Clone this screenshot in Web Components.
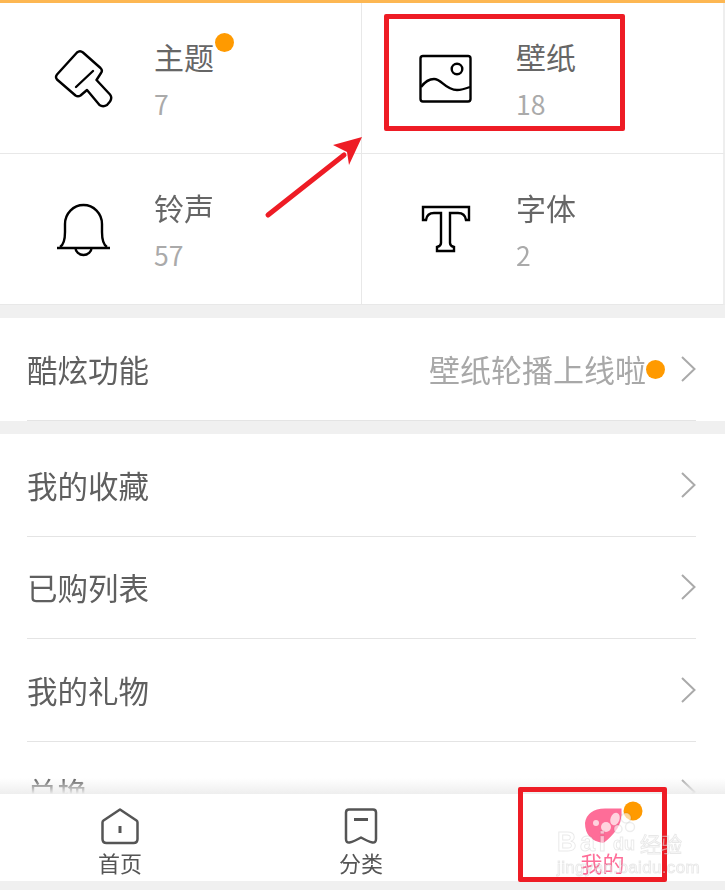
<!DOCTYPE html>
<html lang="zh">
<head>
<meta charset="utf-8">
<title>我的</title>
<style>
  html, body { margin: 0; padding: 0; background: #f0f0f0; }
  body { font-family: "Noto Sans CJK SC", "Noto Sans", sans-serif; width: 725px; height: 890px; overflow: hidden; }
</style>
</head>
<body>
<app-page>
  <tile-grid>
    <theme-tile name="主题" count="7" dot>
      <svg viewBox="54 45 60 66" width="60" height="66" fill="none" stroke="#000" stroke-width="2.4" stroke-linejoin="round" stroke-linecap="round">
        <path d="M77 52.5q3-2.5 6 0L100.5 68q2.5 2.5.5 5L96.500 80 110 94.500q2.500 3 0 7l-3 3.500q-4 2.500-7.500 0L87 90l-6.500 5.500q-2.500 1.500-5 0L57 79.500q-2-2.500 0-5z"/>
        <path d="M76 87L93 71"/>
      </svg>
    </theme-tile>
    <theme-tile name="壁纸" count="18">
      <svg viewBox="54 45 60 66" width="60" height="66" fill="none" stroke="#000" stroke-width="2.400">
        <rect x="58.500" y="56" width="50" height="45.500" rx="2.500"/>
        <circle cx="95" cy="69" r="5.300"/>
        <path d="M59 87q6-8 13-8c8 0 11 11 23 11 5 0 9-1.500 13-3"/>
      </svg>
    </theme-tile>
    <theme-tile name="铃声" count="57">
      <svg viewBox="54 45 60 66" width="60" height="66" fill="none" stroke="#000" stroke-width="2.400">
        <path d="M57 97h53"/>
        <path d="M60 96q5-3 5-15V73a18.500 19 0 0 1 37 0v8q0 12 5 15"/>
        <path d="M75.500 97a8 7 0 0 0 16 0"/>
      </svg>
    </theme-tile>
    <theme-tile name="字体" count="2">
      <svg viewBox="54 45 60 66" width="60" height="66" fill="none" stroke="#000" stroke-width="2.400" stroke-linejoin="miter">
        <path transform="translate(-362 -151)" d="M423 207H469V220H466Q465 213 458 213H450V243Q450 246 454 247V251H437V247Q441 246 441 243V213H434Q427 213 426 220H423Z"/>
      </svg>
    </theme-tile>
  </tile-grid>

  <list-group class="feature">
    <list-row label="酷炫功能" note="壁纸轮播上线啦" dot></list-row>
  </list-group>

  <list-group class="fill">
    <list-row label="我的收藏"></list-row>
    <list-row label="已购列表"></list-row>
    <list-row label="我的礼物"></list-row>
    <list-row label="兑换"></list-row>
  </list-group>

  <tab-bar>
    <tab-item label="首页">
      <svg viewBox="0 0 40 38" width="40" height="38" fill="none" stroke="#555" stroke-width="2.500" stroke-linejoin="round">
        <path d="M20 2.500L36.500 13.500q1 .7 1 2V32q0 4-4 4H6.500q-4 0-4-4V15.500q0-1.300 1-2z"/>
        <path d="M20 19v7" stroke-width="3"/>
      </svg>
    </tab-item>
    <tab-item label="分类">
      <svg viewBox="0 0 40 38" width="40" height="38" fill="none" stroke="#555" stroke-width="2.500" stroke-linejoin="round">
        <path d="M8 2.500H32q3 0 3 3V32q0 4-3.500 3.500Q27 34.500 20 30.500 13 34.500 8.500 35.500 5 36 5 32V5.500q0-3 3-3z"/>
        <path d="M13 12.500H27" stroke-width="3"/>
      </svg>
    </tab-item>
    <tab-item label="我的" active>
      <svg viewBox="0 0 40 38" width="40" height="38">
        <path fill="#fe6d98" d="M38.500 1.500Q40 16 31 26 24 34 20 36 2 33 2 16 4 2 22 1.500z"/>
        <circle cx="13" cy="16" r="3" fill="#ffd3de"/>
        <circle cx="23" cy="20" r="5" fill="#ffd3de"/>
        <ellipse cx="32" cy="12" rx="4.500" ry="6.500" transform="rotate(20 32 12)" fill="#ffd3de"/>
      </svg>
    </tab-item>
  </tab-bar>
</app-page>

<photo-marks></photo-marks>

<script>
// orange strip + column that holds everything, the list gets clipped by the tab bar
class AppPage extends HTMLElement {
  constructor() {
    super();
    this.attachShadow({ mode: 'open' }).innerHTML = `
      <style>
        :host { display: flex; flex-direction: column; height: 890px; overflow: hidden; filter: blur(.35px); }
        .strip { flex: none; height: 3px; background: #fdb752; }
      </style>
      <div class="strip"></div>
      <slot></slot>`;
  }
}

class TileGrid extends HTMLElement {
  constructor() {
    super();
    this.attachShadow({ mode: 'open' }).innerHTML = `
      <style>
        :host { flex: none; display: grid; grid-template-columns: 362px 363px; grid-auto-rows: 151px; height: 302px; background: #fff; }
      </style>
      <slot></slot>`;
  }
}

class ThemeTile extends HTMLElement {
  constructor() {
    super();
    this.attachShadow({ mode: 'open' }).innerHTML = `
      <style>
        :host { display: flex; align-items: flex-start; box-sizing: border-box; padding: 42px 0 0 54px; gap: 40px; border-bottom: 1px solid #e8e8e8; border-right: 1px solid #e8e8e8; background: #fff; }
        :host(:nth-child(2n)) { border-right: 2px solid #eee; }
        .text { display: flex; flex-direction: column; }
        .name { position: relative; font-size: 30px; line-height: 32px; margin-top: -5px; color: #666; white-space: nowrap; }
        .count { font-size: 26.5px; line-height: 32px; margin-top: 16px; color: #aaa; }
        .dot { display: none; position: absolute; left: 61px; top: -7px; width: 19px; height: 19px; border-radius: 50%; background: #ff9a00; }
        :host([dot]) .dot { display: block; }
        .icon { flex: none; width: 60px; height: 66px; }
        ::slotted(svg) { display: block; }
      </style>
      <div class="icon"><slot></slot></div>
      <div class="text">
        <div class="name"><span class="label"></span><i class="dot"></i></div>
        <div class="count"></div>
      </div>`;
  }
  connectedCallback() {
    this.shadowRoot.querySelector('.label').textContent = this.getAttribute('name');
    this.shadowRoot.querySelector('.count').textContent = this.getAttribute('count');
  }
}

class ListGroup extends HTMLElement {
  constructor() {
    super();
    this.attachShadow({ mode: 'open' }).innerHTML = `
      <style>
        :host { flex: none; display: block; margin-top: 13px; background: #fff; }
        :host(.fill) { flex: 1 1 0; min-height: 0; margin-top: 13.5px; overflow: hidden; }
      </style>
      <slot></slot>`;
  }
}

class ListRow extends HTMLElement {
  constructor() {
    super();
    this.attachShadow({ mode: 'open' }).innerHTML = `
      <style>
        :host { display: block; padding: 0 29px 0 27px; }
        .row { position: relative; display: flex; align-items: center; box-sizing: border-box; height: 102.5px; border-bottom: 1px solid #e4e4e4; }
        .label { flex: 1; font-size: 30.5px; line-height: 36px; color: #5f5f5f; }
        .note { font-size: 31px; line-height: 36px; color: #a8a8a8; margin-right: 35px; }
        .dot { display: none; position: absolute; left: 619px; top: 42px; width: 19px; height: 19px; border-radius: 50%; background: #ff9a00; }
        :host([dot]) .dot { display: block; }
        svg { flex: none; display: block; }
      </style>
      <div class="row">
        <div class="label"></div>
        <div class="note"></div>
        <i class="dot"></i>
        <svg width="15" height="26" viewBox="0 0 15 26" fill="none" stroke="#aaa" stroke-width="2"><path d="M1 1l12.500 12L1 25"/></svg>
      </div>`;
  }
  connectedCallback() {
    this.shadowRoot.querySelector('.label').textContent = this.getAttribute('label');
    this.shadowRoot.querySelector('.note').textContent = this.getAttribute('note') || '';
  }
}

class TabBar extends HTMLElement {
  constructor() {
    super();
    this.attachShadow({ mode: 'open' }).innerHTML = `
      <style>
        :host { position: relative; flex: none; display: grid; grid-template-columns: 240px 242px 241px; height: 87px; margin-bottom: 9px; background: #fff; }
        :host::before { content: ""; position: absolute; left: 0; right: 0; top: -16px; height: 16px; background: linear-gradient(rgba(238,238,238,0), #eee); }
      </style>
      <slot></slot>`;
  }
}

class TabItem extends HTMLElement {
  constructor() {
    super();
    this.attachShadow({ mode: 'open' }).innerHTML = `
      <style>
        :host { display: flex; flex-direction: column; align-items: center; padding-top: 13px; color: #555; font-size: 22px; }
        :host([active]) { color: #fe6d98; }
        ::slotted(svg) { display: block; }
        .label { line-height: 30px; margin-top: 2px; }
      </style>
      <slot></slot>
      <div class="label"></div>`;
  }
  connectedCallback() {
    this.shadowRoot.querySelector('.label').textContent = this.getAttribute('label');
  }
}

// red boxes, arrow and the baidu watermark are drawn over the screenshot
class PhotoMarks extends HTMLElement {
  constructor() {
    super();
    this.attachShadow({ mode: 'open' }).innerHTML = `
      <style>
        :host { position: absolute; left: 0; top: 0; width: 725px; height: 890px; pointer-events: none; }
        .box { position: absolute; box-sizing: border-box; border: 5px solid #ee1c25; border-radius: 2px; }
        .one { left: 384px; top: 14px; width: 241px; height: 117px; }
        .two { left: 518px; top: 787px; width: 149px; height: 95px; }
        svg { position: absolute; left: 0; top: 0; }
        .mark { position: absolute; color: rgba(255,255,255,.55); -webkit-text-stroke: 1px rgba(0,0,0,.09); white-space: nowrap; font-family: "Liberation Sans", sans-serif; filter: blur(.4px); }
        .bai { left: 557px; top: 827px; font-size: 27px; line-height: 30px; font-weight: 700; letter-spacing: 3.5px; }
        .du { left: 613px; top: 833px; font-size: 18px; line-height: 22px; font-weight: 700; }
        .jy { left: 640px; top: 829px; font-size: 21px; line-height: 28px; font-family: "Noto Sans CJK SC", sans-serif; }
        .url { left: 557px; top: 858px; font-size: 17px; line-height: 20px; letter-spacing: .35px; }
      </style>
      <div class="box one"></div>
      <div class="box two"></div>
      <svg width="725" height="890" viewBox="0 0 725 890">
        <path d="M268 215L344 155" stroke="#ee1c25" stroke-width="5" stroke-linecap="round"/>
        <path d="M362 137L333 145 347 152 349 165z" fill="#ee1c25"/>
        <circle cx="633" cy="811" r="9.500" fill="#ff9a00"/>
        <g fill="#fff" fill-opacity=".6" stroke="#000" stroke-opacity=".07" stroke-width="1.500">
          <circle cx="626" cy="818" r="5"/>
          <circle cx="630" cy="827" r="4.500"/>
          <circle cx="618" cy="829" r="4"/>
        </g>
      </svg>
      <span class="mark bai">Bai</span>
      <span class="mark du">du</span>
      <span class="mark jy">经验</span>
      <span class="mark url">jingyan.baidu.com</span>`;
  }
}

customElements.define('app-page', AppPage);
customElements.define('tile-grid', TileGrid);
customElements.define('theme-tile', ThemeTile);
customElements.define('list-group', ListGroup);
customElements.define('list-row', ListRow);
customElements.define('tab-bar', TabBar);
customElements.define('tab-item', TabItem);
customElements.define('photo-marks', PhotoMarks);
</script>
</body>
</html>
